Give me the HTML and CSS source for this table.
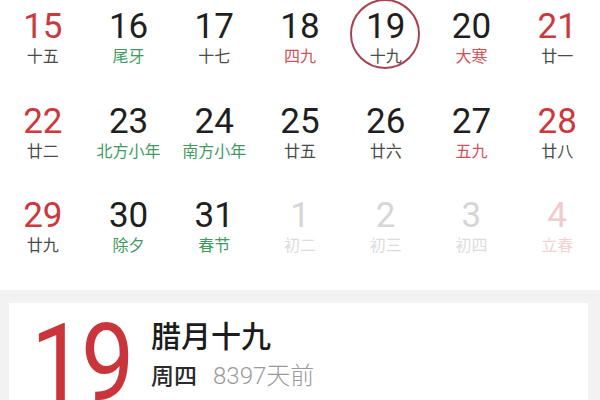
FILE: index.html
```html
<!DOCTYPE html>
<html lang="zh">
<head>
<meta charset="utf-8">
<link rel="stylesheet" href="styles.css">
</head>
<body>
<div class="calendar">
  <div class="cell"><span class="num red">15</span><span class="lunar">十五</span></div>
  <div class="cell"><span class="num">16</span><span class="lunar green">尾牙</span></div>
  <div class="cell"><span class="num">17</span><span class="lunar">十七</span></div>
  <div class="cell"><span class="num">18</span><span class="lunar pink">四九</span></div>
  <div class="cell today"><span class="ring"></span><span class="num">19</span><span class="lunar">十九</span></div>
  <div class="cell"><span class="num">20</span><span class="lunar pink">大寒</span></div>
  <div class="cell"><span class="num red">21</span><span class="lunar">廿一</span></div>

  <div class="cell"><span class="num red">22</span><span class="lunar">廿二</span></div>
  <div class="cell"><span class="num">23</span><span class="lunar green">北方小年</span></div>
  <div class="cell"><span class="num">24</span><span class="lunar green">南方小年</span></div>
  <div class="cell"><span class="num">25</span><span class="lunar">廿五</span></div>
  <div class="cell"><span class="num">26</span><span class="lunar">廿六</span></div>
  <div class="cell"><span class="num">27</span><span class="lunar pink">五九</span></div>
  <div class="cell"><span class="num red">28</span><span class="lunar">廿八</span></div>

  <div class="cell"><span class="num red">29</span><span class="lunar">廿九</span></div>
  <div class="cell"><span class="num">30</span><span class="lunar green">除夕</span></div>
  <div class="cell"><span class="num">31</span><span class="lunar green">春节</span></div>
  <div class="cell faded"><span class="num">1</span><span class="lunar">初二</span></div>
  <div class="cell faded"><span class="num">2</span><span class="lunar">初三</span></div>
  <div class="cell faded"><span class="num">3</span><span class="lunar">初四</span></div>
  <div class="cell faded rose"><span class="num">4</span><span class="lunar">立春</span></div>
</div>
<div class="detail">
  <div class="card">
    <div class="bigday">19</div>
    <div class="info">
      <div class="lunar-date">腊月十九</div>
      <div class="meta"><span class="weekday">周四</span><span class="ago">8397天前</span></div>
    </div>
  </div>
</div>
</body>
</html>
```

FILE: styles.css
```css
* { box-sizing: border-box; }
html, body { margin: 0; padding: 0; }
body {
  width: 600px;
  height: 400px;
  overflow: hidden;
  background: #ffffff;
  font-family: Roboto, "Noto Sans CJK SC", sans-serif;
}
.calendar {
  display: grid;
  grid-template-columns: repeat(7, 1fr);
  grid-auto-rows: 94.5px;
  padding-bottom: 6px;
}
.cell {
  position: relative;
  display: flex;
  flex-direction: column;
  align-items: center;
  padding-top: 9px;
}
.num {
  font-family: Roboto, sans-serif;
  font-size: 35px;
  line-height: 36px;
  color: #1f1f1f;
}
.lunar {
  font-family: "Noto Sans CJK SC", sans-serif;
  font-size: 16px;
  line-height: 21px;
  color: #4a4a4a;
}
.num.red { color: #c9393d; }
.lunar.green { color: #3f9b5f; }
.lunar.pink { color: #d0535c; }
.faded .num { color: #d6d6d6; }
.faded .lunar { color: #dcdcdc; }
.faded.rose .num { color: #f0cccc; }
.faded.rose .lunar { color: #f2d2d2; }
.ring {
  position: absolute;
  left: 50%;
  top: -1px;
  width: 70px;
  height: 70px;
  margin-left: -36px;
  border: 2px solid #a8424e;
  border-radius: 50%;
}
.detail {
  background: #f2f2f2;
  padding: 13px 12px 0 9px;
  height: 110px;
}
.card {
  background: #ffffff;
  height: 100%;
  display: flex;
  align-items: flex-start;
  padding: 6px 0 0 22px;
  overflow: hidden;
}
.bigday {
  font-family: Roboto, sans-serif;
  font-weight: 400;
  font-size: 108px;
  line-height: 108px;
  color: #c9353a;
  letter-spacing: -4px;
  transform: scaleX(0.88);
  transform-origin: left top;
  width: 120px;
}
.info {
  display: flex;
  flex-direction: column;
  padding-top: 6px;
}
.lunar-date {
  font-family: "Noto Sans CJK SC", sans-serif;
  font-size: 30px;
  line-height: 38px;
  font-weight: 500;
  color: #1c1c1c;
}
.meta {
  margin-top: 6px;
  display: flex;
  align-items: baseline;
  gap: 16px;
  font-size: 23px;
  line-height: 30px;
}
.weekday {
  font-family: "Noto Sans CJK SC", sans-serif;
  font-weight: 500;
  color: #2a2a2a;
}
.ago {
  font-family: Roboto, "Noto Sans CJK SC", sans-serif;
  font-size: 24px;
  font-weight: 300;
  color: #9a9a9a;
}
```
